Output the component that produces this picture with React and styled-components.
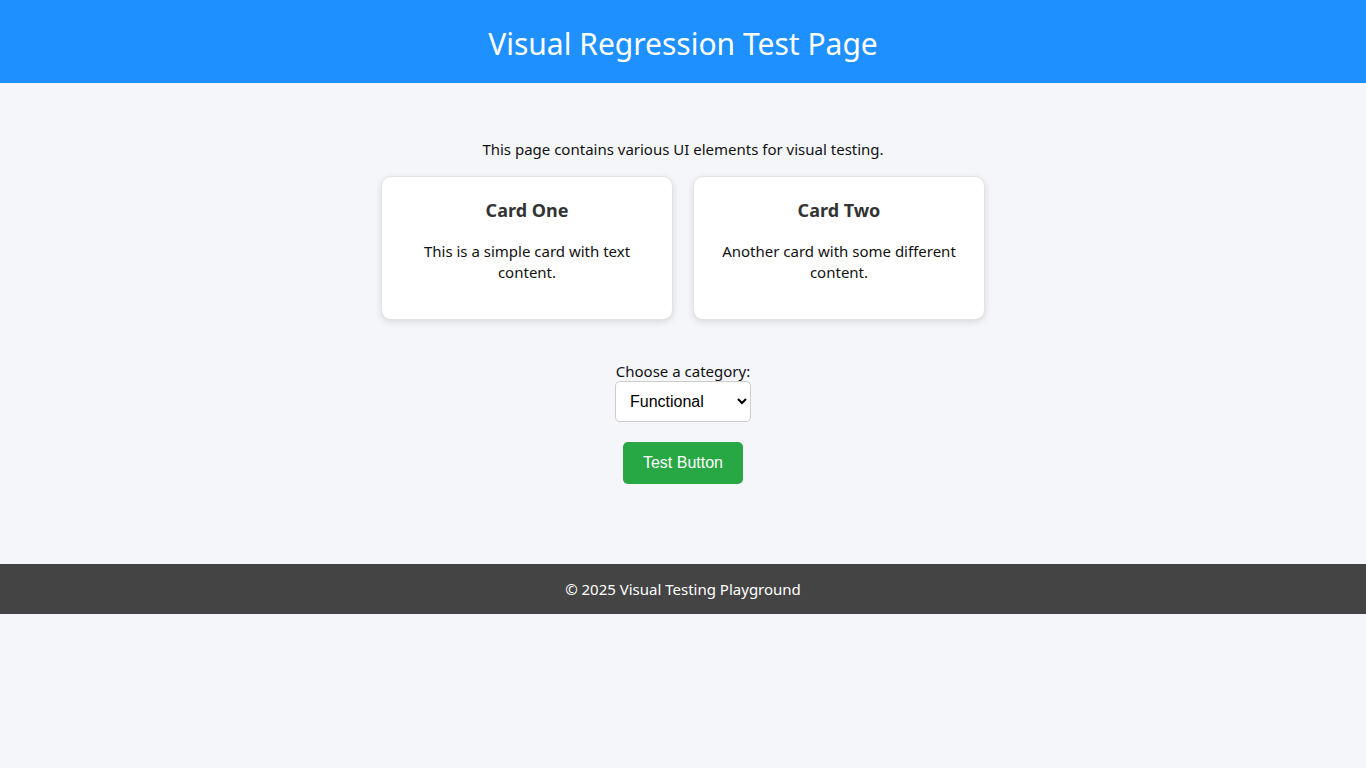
import React from "react";
import styled, { createGlobalStyle } from "styled-components";

const GlobalStyle = createGlobalStyle`
  body {
    margin: 0;
    background-color: #f4f6f9;
    font-family: "Noto Sans", "Open Sans", sans-serif;
    color: #111;
  }
`;

const Header = styled.header`
  background-color: #1e90ff;
  color: white;
  padding: 22px 20px 18px;
  text-align: center;
  h1 {
    margin: 0;
    font-size: 30px;
    font-weight: 400;
    line-height: 43px;
  }
`;

const Main = styled.main`
  padding: 40px 20px 80px;
  text-align: center;
`;

const Intro = styled.p`
  margin: 16px 0;
  font-size: 15px;
  line-height: 21px;
`;

const CardRow = styled.div`
  display: flex;
  justify-content: center;
  gap: 20px;
`;

const Card = styled.div`
  width: 250px;
  padding: 20px;
  background: white;
  border: 1px solid #e2e2e6;
  border-radius: 10px;
  box-shadow: 0 2px 7px rgba(0, 0, 0, 0.12);
  h2 {
    margin: 0 0 18px;
    font-size: 18px;
    line-height: 26px;
    font-weight: 700;
    color: #333;
  }
  p {
    margin: 0 0 16px;
    font-size: 15px;
    line-height: 21px;
  }
`;

const Form = styled.div`
  margin-top: 41px;
  display: flex;
  flex-direction: column;
  align-items: center;
  label {
    font-size: 15px;
    line-height: 21px;
  }
`;

const Select = styled.select`
  margin-top: -1px;
  width: 136px;
  height: 41px;
  padding: 0 8px 0 10px;
  font-family: "Liberation Sans", Arial, sans-serif;
  font-size: 16px;
  background: white;
  border: 1px solid #ccc;
  border-radius: 5px;
  color: #000;
`;

const Button = styled.button`
  margin-top: 20px;
  width: 120px;
  height: 42px;
  background-color: #28a745;
  color: white;
  border: none;
  border-radius: 5px;
  font-family: "Liberation Sans", Arial, sans-serif;
  font-size: 16px;
  cursor: pointer;
`;

const Footer = styled.footer`
  background-color: #444;
  color: white;
  text-align: center;
  padding: 14px;
  font-size: 15px;
  line-height: 22px;
`;

export default function App() {
  return (
    <>
      <GlobalStyle />
      <Header>
        <h1>Visual Regression Test Page</h1>
      </Header>
      <Main>
        <Intro>This page contains various UI elements for visual testing.</Intro>
        <CardRow>
          <Card>
            <h2>Card One</h2>
            <p>This is a simple card with text content.</p>
          </Card>
          <Card>
            <h2>Card Two</h2>
            <p>Another card with some different content.</p>
          </Card>
        </CardRow>
        <Form>
          <label htmlFor="category">Choose a category:</label>
          <Select id="category" defaultValue="functional">
            <option value="functional">Functional</option>
            <option value="visual">Visual</option>
            <option value="performance">Performance</option>
          </Select>
          <Button>Test Button</Button>
        </Form>
      </Main>
      <Footer>© 2025 Visual Testing Playground</Footer>
    </>
  );
}
